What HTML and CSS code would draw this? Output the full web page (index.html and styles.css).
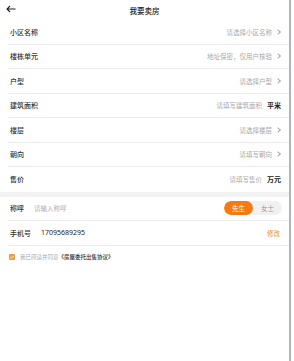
FILE: index.html
```html
<!DOCTYPE html>
<html>
<head>
<meta charset="utf-8">
<link rel="stylesheet" href="styles.css">
</head>
<body>
<div class="frame">
  <div class="page">
    <header class="topbar">
      <svg class="back" width="10" height="8" viewBox="0 0 10 8"><path d="M9.5 4H1.2M4 1L1 4l3 3" fill="none" stroke="#222" stroke-width="1.1"/></svg>
      <div class="title">我要卖房</div>
    </header>
    <section class="form">
      <div class="row"><span class="label">小区名称</span><span class="value">请选择小区名称<i class="chev"></i></span></div>
      <div class="row"><span class="label">楼栋单元</span><span class="value">地址保密，仅用户核验<i class="chev"></i></span></div>
      <div class="row"><span class="label">户型</span><span class="value">请选择户型<i class="chev"></i></span></div>
      <div class="row"><span class="label">建筑面积</span><span class="value">请填写建筑面积<b class="unit">平米</b></span></div>
      <div class="row"><span class="label">楼层</span><span class="value">请选择楼层<i class="chev"></i></span></div>
      <div class="row"><span class="label">朝向</span><span class="value">请填写朝向<i class="chev"></i></span></div>
      <div class="row last"><span class="label">售价</span><span class="value">请填写售价<b class="unit">万元</b></span></div>
    </section>
    <div class="gap"></div>
    <section class="form">
      <div class="row"><span class="label">称呼</span><span class="ph">请输入称呼</span>
        <span class="toggle"><span class="opt on">先生</span><span class="opt">女士</span></span></div>
      <div class="row"><span class="label">手机号</span><span class="phone">17095689295</span><span class="edit">修改</span></div>
    </section>
    <div class="agree"><span class="check"><svg width="6" height="6" viewBox="0 0 6 6"><path d="M1.2 3l1.3 1.3L4.9 1.8" fill="none" stroke="#fff" stroke-width="0.9"/></svg></span><span class="agree-text">我已阅读并同意</span><span class="doc">《房屋委托出售协议》</span></div>
  </div>
</div>
</body>
</html>
```
FILE: styles.css
```css
html, body {
  margin: 0;
  padding: 0;
  background: #fff;
}
body {
  font-family: "Noto Sans CJK SC", "Noto Sans", sans-serif;
  color: #333;
  width: 294px;
  height: 361px;
  overflow: hidden;
}
.frame {
  width: 289px;
  height: 361px;
  border-right: 2px solid #aeb5c2;
  box-sizing: content-box;
}
.page {
  width: 289px;
}
.topbar {
  height: 20px;
  display: flex;
  align-items: center;
  justify-content: center;
  position: relative;
}
.back {
  position: absolute;
  left: 6px;
  top: 5px;
}
.title {
  font-size: 7.5px;
  color: #222;
  font-weight: 500;
}
.row {
  height: 24.5px;
  box-sizing: border-box;
  margin-left: 8px;
  padding: 0 8px 0 2px;
  border-bottom: 0.5px solid #ececec;
  display: flex;
  align-items: center;
}
.row.last {
  border-bottom: none;
}
.label {
  font-size: 7px;
  color: #333;
  font-weight: 500;
}
.value {
  margin-left: auto;
  font-size: 6.5px;
  color: #a8a8a8;
  display: flex;
  align-items: center;
}
.chev {
  display: inline-block;
  width: 3px;
  height: 3px;
  border-top: 0.7px solid #a8a8a8;
  border-right: 0.7px solid #a8a8a8;
  transform: rotate(45deg);
  margin-left: 4px;
  margin-right: 1px;
}
.unit {
  font-size: 7px;
  color: #222;
  font-weight: 700;
  margin-left: 5px;
}
.gap {
  height: 5px;
  background: #f2f2f3;
}
.ph {
  font-size: 6.5px;
  color: #b0b0b0;
  margin-left: 10px;
}
.toggle {
  margin-left: auto;
  display: flex;
  height: 14px;
  border-radius: 7px;
  background: #f1f1f1;
  overflow: hidden;
  margin-right: -1px;
}
.opt {
  width: 29px;
  display: flex;
  align-items: center;
  justify-content: center;
  font-size: 6.5px;
  color: #999;
}
.opt.on {
  background: #f67a0f;
  color: #fff;
  border-radius: 7px;
}
.phone {
  font-size: 7px;
  color: #222;
  margin-left: 10px;
  font-family: "Noto Sans", sans-serif;
}
.edit {
  margin-left: auto;
  font-size: 6.5px;
  color: #f08a2a;
  margin-right: 1px;
}
.agree {
  display: flex;
  align-items: center;
  padding: 6px 0 0 9px;
  height: 11px;
}
.check {
  width: 6px;
  height: 6px;
  background: #f39a3b;
  border-radius: 1px;
  display: flex;
  margin-right: 5px;
}
.agree-text {
  font-size: 5.5px;
  color: #aaa;
}
.doc {
  font-size: 5.5px;
  color: #333;
  font-weight: 500;
}
```
